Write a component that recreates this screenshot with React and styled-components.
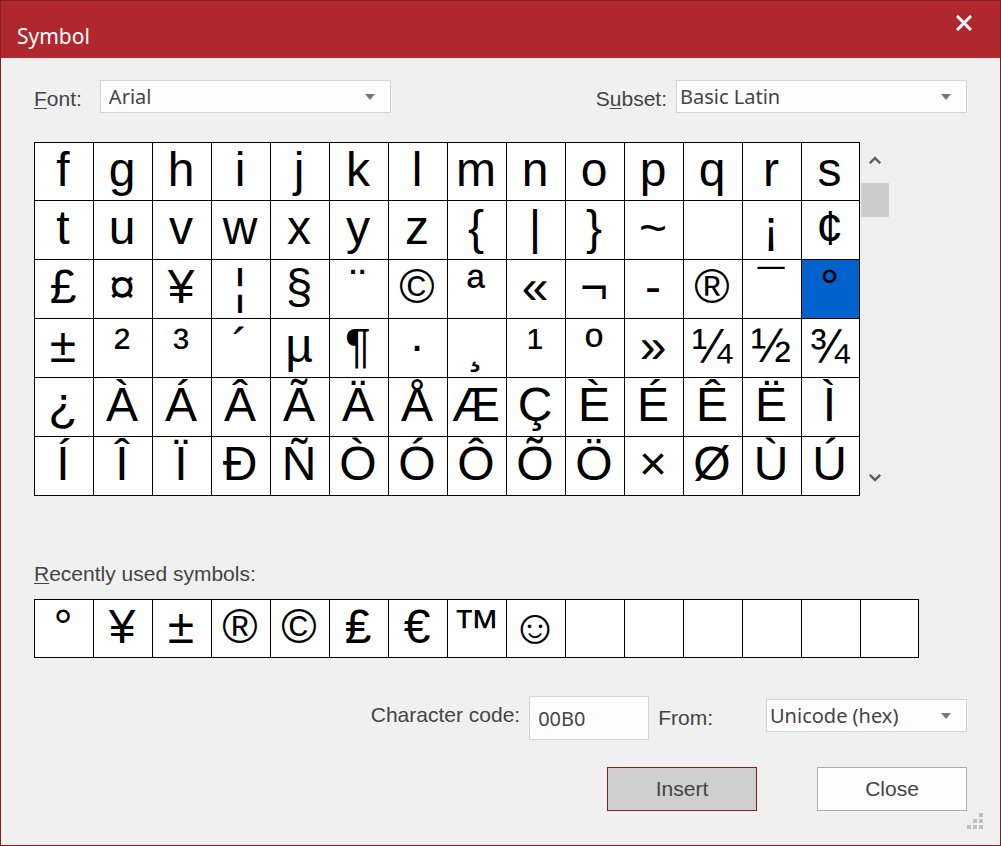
import React, { useState } from "react";
import styled, { createGlobalStyle } from "styled-components";

const symbols = [
  ..."fghijklmnopqrs",
  ..."tuvwxyz{|}~\u00a0¡¢",
  ..."£¤¥¦§¨©ª«¬-®¯°",
  ..."±²³´µ¶·¸¹º»¼½¾",
  ..."¿ÀÁÂÃÄÅÆÇÈÉÊËÌ",
  ..."ÍÎÏÐÑÒÓÔÕÖ×ØÙÚ",
];

const recent = [..."°¥±®©₤€™☺", "", "", "", "", "", ""];

function App() {
  const [selected, setSelected] = useState("°");
  const code = selected
    .codePointAt(0)
    .toString(16)
    .toUpperCase()
    .padStart(4, "0");

  return (
    <Dialog>
      <GlobalStyle />
      <Header>
        <Title>Symbol</Title>
        <CloseIcon aria-label="Close dialog">
          <svg width="16" height="16" viewBox="0 0 16 16">
            <path d="M1 1L15 15M15 1L1 15" stroke="#fff" strokeWidth="3" />
          </svg>
        </CloseIcon>
      </Header>
      <Main>
        <TopRow>
          <Field $gap={18}>
            <Label htmlFor="font">
              <u>F</u>ont:
            </Label>
            <Dropdown id="font" $width={291} $indent={8}>
              <option>Arial</option>
            </Dropdown>
          </Field>
          <Field $gap={9}>
            <Label htmlFor="subset">
              S<u>u</u>bset:
            </Label>
            <Dropdown id="subset" $width={291} $indent={3}>
              <option>Basic Latin</option>
            </Dropdown>
          </Field>
        </TopRow>

        <Panel>
          <SymbolGrid $columns={14}>
            {symbols.map((s, i) => (
              <Symbol
                key={i}
                $active={s === selected}
                aria-pressed={s === selected}
                onClick={() => setSelected(s)}
              >
                {s}
              </Symbol>
            ))}
          </SymbolGrid>
          <Scrollbar>
            <ScrollButton aria-label="Scroll up">
              <Chevron d="M0.8 8.2L6 3L11.2 8.2" />
            </ScrollButton>
            <Thumb />
            <ScrollButton aria-label="Scroll down">
              <Chevron d="M0.8 1.8L6 7L11.2 1.8" />
            </ScrollButton>
          </Scrollbar>
        </Panel>

        <Label as="div">
          <u>R</u>ecently used symbols:
        </Label>
        <RecentPanel>
          <SymbolGrid $columns={15}>
            {recent.map((s, i) => (
              <Symbol
                key={i}
                disabled={!s}
                aria-label={s ? undefined : "Empty"}
                onClick={() => setSelected(s)}
              >
                {s}
              </Symbol>
            ))}
          </SymbolGrid>
        </RecentPanel>

        <CodeRow>
          <Raised>
            <Label htmlFor="code">Character code:</Label>
          </Raised>
          <CodeInput id="code" value={code} readOnly />
          <Label htmlFor="from">From:</Label>
          <Raised $end>
            <Dropdown id="from" $width={201} $indent={3}>
              <option>Unicode (hex)</option>
            </Dropdown>
          </Raised>
        </CodeRow>

        <Actions>
          <Button $primary>Insert</Button>
          <Button>Close</Button>
        </Actions>
      </Main>
      <Grip>
        <svg width="16" height="16" viewBox="0 0 16 16" fill="#bfbfbf">
          <path d="M12 0h4v4h-4zM6 6h4v4H6zM12 6h4v4h-4zM0 12h4v4H0zM6 12h4v4H6zM12 12h4v4h-4z" />
        </svg>
      </Grip>
    </Dialog>
  );
}

export default App;

function Chevron({ d }) {
  return (
    <svg width="12" height="10" viewBox="0 0 12 10">
      <path d={d} fill="none" stroke="#606060" strokeWidth="2.5" />
    </svg>
  );
}

function Dropdown({ children, $width, $indent, ...rest }) {
  return (
    <SelectBox $width={$width}>
      <Select $indent={$indent} {...rest}>
        {children}
      </Select>
      <Arrow width="10" height="6" viewBox="0 0 10 6">
        <path d="M0 0H10L5 6Z" fill="#777" />
      </Arrow>
    </SelectBox>
  );
}

const GlobalStyle = createGlobalStyle`
  * {
    box-sizing: border-box;
  }
  body {
    margin: 0;
    background: #f0f0f0;
    color: #444;
    font-family: "Liberation Sans", Arial, sans-serif;
  }
`;

const Dialog = styled.div`
  min-height: 100vh;
  display: flex;
  flex-direction: column;
  background: #f0f0f0;
  border: 1px solid #8a1c22;
`;

const Header = styled.header`
  height: 57px;
  display: flex;
  justify-content: space-between;
  align-items: flex-start;
  padding: 14px 28px 0 16px;
  background: #b0282d;
`;

const Title = styled.h1`
  margin: 6px 0 0;
  font-family: "Noto Sans", sans-serif;
  font-size: 21px;
  font-weight: 400;
  line-height: 30px;
  color: #fff;
`;

const CloseIcon = styled.button`
  display: flex;
  padding: 0;
  border: none;
  background: none;
  cursor: pointer;
`;

const Main = styled.main`
  flex: 1;
  display: flex;
  flex-direction: column;
  padding: 22px 33px 0;
`;

const TopRow = styled.div`
  display: flex;
  justify-content: space-between;
  margin-bottom: 29px;
`;

const Field = styled.div`
  display: flex;
  align-items: flex-end;
  gap: ${(p) => p.$gap}px;
`;

const Label = styled.label`
  font-size: 21px;
  line-height: 28px;
  white-space: nowrap;
  u {
    text-decoration-thickness: 1px;
    text-underline-offset: 2px;
  }
`;

const SelectBox = styled.div`
  position: relative;
  width: ${(p) => p.$width}px;
  height: 33px;
`;

const Select = styled.select`
  display: block;
  width: 100%;
  height: 100%;
  padding: 0 32px 0 ${(p) => p.$indent}px;
  appearance: none;
  border: 1px solid #d4d4d4;
  border-radius: 0;
  background: #fdfdfd;
  color: #444;
  font-family: "Noto Sans", sans-serif;
  font-size: 20px;
`;

const Arrow = styled.svg`
  position: absolute;
  right: 16px;
  top: 14px;
  pointer-events: none;
`;

const Panel = styled.section`
  display: flex;
  align-items: flex-start;
  gap: 1px;
  padding-bottom: 45px;
  margin-bottom: 19px;
  background: #efefef;
`;

const RecentPanel = styled.section`
  display: flex;
  margin: 11px 0 38px;
  background: #efefef;
`;

const SymbolGrid = styled.div`
  display: grid;
  grid-template-columns: repeat(${(p) => p.$columns - 1}, 58px) 57px;
  grid-template-rows: 57px;
  grid-auto-rows: 58px;
  gap: 1px;
  padding: 1px;
  background: #000;
`;

const Symbol = styled.button`
  display: flex;
  justify-content: center;
  align-items: flex-start;
  padding: 0 2px 0 0;
  border: none;
  overflow: hidden;
  background: ${(p) => (p.$active ? "#0063cc" : "#fff")};
  color: #000;
  font-family: "Liberation Sans", Arial, sans-serif;
  font-size: 48px;
  line-height: 54px;
`;

const Scrollbar = styled.div`
  align-self: stretch;
  width: 28px;
  display: flex;
  flex-direction: column;
`;

const ScrollButton = styled.button`
  height: 36px;
  display: flex;
  align-items: center;
  justify-content: center;
  padding: 0;
  border: none;
  background: none;
  &:last-child {
    margin-top: auto;
  }
`;

const Thumb = styled.div`
  height: 34px;
  margin-top: 5px;
  background: #cdcdcd;
`;

const CodeRow = styled.div`
  display: flex;
  align-items: center;
  justify-content: flex-end;
  gap: 9px;
  margin-bottom: 27px;
`;

const Raised = styled.div`
  padding-bottom: 6px;
  margin-left: ${(p) => (p.$end ? 44 : 0)}px;
`;

const CodeInput = styled.input`
  width: 120px;
  height: 44px;
  padding: 0 8px;
  border: 1px solid #d4d4d4;
  background: #fdfdfd;
  color: #444;
  font-family: "Noto Sans", sans-serif;
  font-size: 20px;
`;

const Actions = styled.div`
  display: flex;
  justify-content: flex-end;
  gap: 60px;
`;

const Button = styled.button`
  width: 150px;
  height: 44px;
  border: 1px solid ${(p) => (p.$primary ? "#8a1c22" : "#ababab")};
  background: ${(p) => (p.$primary ? "#cfcfcf" : "#fdfdfd")};
  color: #444;
  font-family: "Liberation Sans", Arial, sans-serif;
  font-size: 21px;
  cursor: pointer;
`;

const Grip = styled.div`
  display: flex;
  justify-content: flex-end;
  padding: 2px 17px 16px;
`;
